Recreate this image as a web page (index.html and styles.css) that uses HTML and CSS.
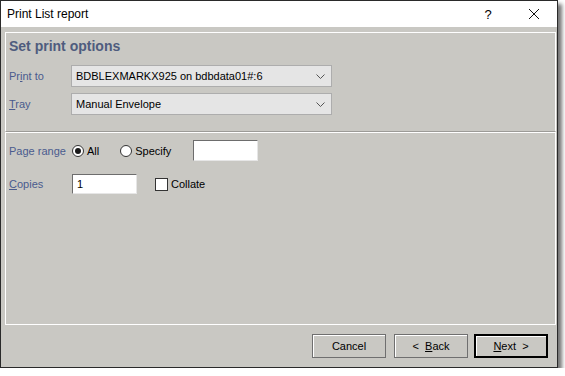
FILE: index.html
```html
<!DOCTYPE html>
<html lang="en">
  <head>
    <meta charset="UTF-8" />
    <title>Print List report</title>
    <link rel="stylesheet" href="styles.css">
  </head>
  <body>
    <div class="window">
      <div class="titlebar">
        <span class="title">Print List report</span>
        <span class="help">?</span>
        <span class="close">
          <svg width="12" height="12" viewBox="0 0 12 12">
            <path d="M1 1 L11 11 M11 1 L1 11" stroke="#111" stroke-width="1" fill="none" />
          </svg>
        </span>
      </div>

      <div class="dialog">
        <div class="panel panel-top">
          <h2>Set print options</h2>
          <div class="row">
            <label class="label">Pr<u>i</u>nt to</label>
            <div class="select">
              <span>BDBLEXMARKX925 on bdbdata01#:6</span>
              <svg width="9" height="5" viewBox="0 0 9 5">
                <path d="M0.5 0.5 L4.5 4.5 L8.5 0.5" stroke="#555" fill="none" />
              </svg>
            </div>
          </div>
          <div class="row">
            <label class="label"><u>T</u>ray</label>
            <div class="select">
              <span>Manual Envelope</span>
              <svg width="9" height="5" viewBox="0 0 9 5">
                <path d="M0.5 0.5 L4.5 4.5 L8.5 0.5" stroke="#555" fill="none" />
              </svg>
            </div>
          </div>
        </div>

        <div class="panel panel-main">
          <div class="row row-range">
            <label class="label">Page range</label>
            <span class="radio checked"></span><span class="opt">All</span>
            <span class="radio radio-specify"></span><span class="opt">Specify</span>
            <span class="field field-range"></span>
          </div>
          <div class="row row-copies">
            <label class="label"><u>C</u>opies</label>
            <span class="field field-copies">1</span>
            <span class="checkbox"></span><span class="opt">Collate</span>
          </div>
        </div>

        <div class="buttons">
          <button type="button">Cancel</button>
          <button type="button" class="back">&lt;&nbsp;&nbsp;<u>B</u>ack</button>
          <button type="button" class="default"><u>N</u>ext&nbsp;&nbsp;&gt;</button>
        </div>
      </div>
    </div>
  </body>
</html>
```

FILE: styles.css
```css
body {
  margin: 0;
  background: #fff;
  font-family: "Liberation Sans", Arial, sans-serif;
  font-size: 11px;
}

.window {
  width: 556px;
  height: 366px;
  border: 1px solid #2a2a2a;
  background: #c9c8c3;
  box-shadow: 4px 4px 4px rgba(0, 0, 0, 0.55);
  display: flex;
  flex-direction: column;
}

.titlebar {
  height: 26px;
  background: #fff;
  display: flex;
  align-items: center;
  font-size: 12px;
  color: #000;
}

.title {
  padding-left: 6px;
  flex: 1;
}

.help {
  width: 46px;
  text-align: center;
  font-size: 13px;
}

.close {
  width: 46px;
  display: flex;
  justify-content: center;
}

.dialog {
  flex: 1;
  display: flex;
  flex-direction: column;
  padding: 5px 1px 0 4px;
}

.panel {
  border: 1px solid #fff;
  padding: 0 0 0 3px;
}

.panel-top {
  height: 93px;
  border-bottom-color: #9c9b97;
  padding-top: 5px;
}

.panel-main {
  flex: 1;
  padding-top: 7px;
}

h2 {
  margin: 0 0 10px;
  font-size: 14px;
  font-weight: bold;
  color: #4f5c7e;
  height: 17px;
  line-height: 17px;
}

.row {
  display: flex;
  align-items: center;
  margin-bottom: 6px;
}

.label {
  width: 62px;
  color: #4a5b8e;
}

.select {
  width: 249px;
  height: 20px;
  border: 1px solid #adadad;
  background: #e5e5e5;
  display: flex;
  align-items: center;
  justify-content: space-between;
  padding: 0 6px 0 4px;
  color: #000;
}

.radio {
  width: 10px;
  height: 10px;
  border: 1px solid #333;
  border-radius: 50%;
  background: #fff;
  position: relative;
  margin-left: 1px;
  margin-right: 3px;
}

.radio.checked::after {
  content: "";
  position: absolute;
  left: 2px;
  top: 2px;
  width: 6px;
  height: 6px;
  border-radius: 50%;
  background: #1a1a1a;
}

.radio-specify {
  margin-left: 21px;
}

.opt {
  color: #000;
}

.field {
  background: #fff;
  border-top: 1px solid #6d6d6d;
  border-left: 1px solid #6d6d6d;
  border-right: 1px solid #e6e6e6;
  border-bottom: 1px solid #e6e6e6;
  box-sizing: border-box;
  color: #000;
}

.field-range {
  width: 65px;
  height: 21px;
  margin-left: 22px;
}

.row-range {
  height: 21px;
  margin-bottom: 13px;
}

.field-copies {
  width: 65px;
  height: 20px;
  padding: 3px 0 0 4px;
  margin-left: 1px;
}

.checkbox {
  width: 11px;
  height: 11px;
  border: 1px solid #333;
  background: #fff;
  margin-left: 18px;
  margin-right: 3px;
}

.buttons {
  height: 42px;
  display: flex;
  justify-content: flex-end;
  align-items: center;
  gap: 8px;
  padding-right: 8px;
}

button {
  width: 74px;
  height: 24px;
  font-family: "Liberation Sans", Arial, sans-serif;
  font-size: 11px;
  color: #000;
  background: #c9c8c3;
  border: 1px solid #6f6f6f;
  box-shadow: inset 1px 1px #fff;
  padding: 0;
}

button.back {
  margin-right: -2px;
}

button.default {
  border: 2px solid #000;
}
```
